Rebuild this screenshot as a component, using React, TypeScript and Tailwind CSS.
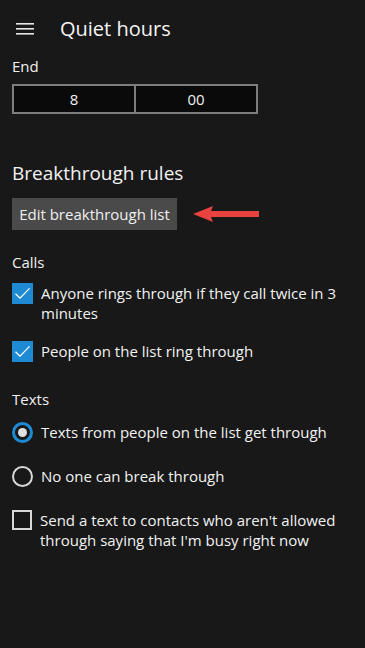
import React from 'react';

function CheckBox({ checked }: { checked: boolean }) {
  return checked ? (
    <span className="flex h-[21px] w-[21px] shrink-0 items-center justify-center bg-[#1d8ad3]">
      <svg width="17" height="17" viewBox="0 0 17 17" fill="none">
        <path d="M1.5 8.8 L6 13.2 L15.5 3.4" stroke="#fff" strokeWidth="1.3" />
      </svg>
    </span>
  ) : (
    <span className="block h-[20px] w-[20px] shrink-0 border-2 border-[#d8d8d8]" />
  );
}

function Radio({ checked }: { checked: boolean }) {
  return checked ? (
    <span className="flex h-[21px] w-[21px] shrink-0 items-center justify-center rounded-full border-[3px] border-[#1d8ad3]">
      <span className="block h-[9px] w-[9px] rounded-full bg-[#e0e0e0]" />
    </span>
  ) : (
    <span className="block h-[21px] w-[21px] shrink-0 rounded-full border-2 border-[#d8d8d8]" />
  );
}

function Option({ control, children }: { control: React.ReactNode; children: React.ReactNode }) {
  return (
    <div className="flex items-start gap-[8px]">
      <div className="shrink-0">{control}</div>
      <p className="text-[15px] leading-[20px] text-[#f2f2f2]">{children}</p>
    </div>
  );
}

export default function App() {
  return (
    <main
      className="h-[648px] w-[365px] overflow-hidden bg-[#181818] text-white"
      style={{ fontFamily: '"Open Sans", "Noto Sans", sans-serif' }}
    >
      <header className="flex h-[56px] items-center pl-[16px] pt-[2px]">
        <svg width="18" height="12" viewBox="0 0 18 12">
          <rect y="0" width="18" height="1.6" fill="#e6e6e6" />
          <rect y="5" width="18" height="1.6" fill="#e6e6e6" />
          <rect y="10" width="18" height="1.6" fill="#e6e6e6" />
        </svg>
        <h1 className="ml-[26px] text-[20px] text-[#f5f5f5]">Quiet hours</h1>
      </header>

      <section className="px-[12px]">
        <p className="text-[15px] leading-[20px] text-[#f0f0f0]">End</p>
        <div className="mt-[8px] flex h-[30px] w-[246px] border-2 border-[#7d7d7d] bg-[#0a0a0a] text-[15px] text-[#f0f0f0]">
          <div className="flex flex-1 items-center justify-center border-r-2 border-[#7d7d7d]">8</div>
          <div className="flex flex-1 items-center justify-center">00</div>
        </div>

        <h2 className="mt-[46px] text-[19px] leading-[26px] text-[#f2f2f2]">Breakthrough rules</h2>

        <div className="mt-[12px] flex items-center">
          <button className="h-[32px] w-[165px] bg-[#4a4a4a] text-[15px] text-[#f0f0f0]">
            Edit breakthrough list
          </button>
          <svg className="ml-[16px]" width="68" height="16" viewBox="0 0 68 16">
            <polygon points="0,8 20,0 18,5 66,5 66,11 18,11 20,16" fill="#e8433e" />
          </svg>
        </div>

        <p className="mt-[22px] text-[15px] leading-[20px] text-[#f0f0f0]">Calls</p>
        <div className="mt-[11px] flex flex-col gap-[18px]">
          <Option control={<CheckBox checked />}>Anyone rings through if they call twice in 3 minutes</Option>
          <Option control={<CheckBox checked />}>People on the list ring through</Option>
        </div>

        <p className="mt-[27px] text-[15px] leading-[20px] text-[#f0f0f0]">Texts</p>
        <div className="mt-[13px] flex flex-col gap-[23px]">
          <Option control={<Radio checked />}>Texts from people on the list get through</Option>
          <Option control={<Radio checked={false} />}>No one can break through</Option>
          <Option control={<CheckBox checked={false} />}>
            Send a text to contacts who aren't allowed through saying that I'm busy right now
          </Option>
        </div>
      </section>
    </main>
  );
}
